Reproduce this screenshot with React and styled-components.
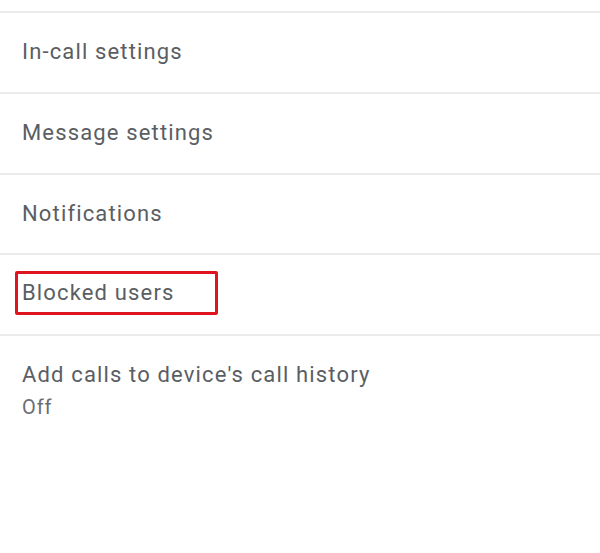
import React from "react";
import styled, { createGlobalStyle } from "styled-components";

const GlobalStyle = createGlobalStyle`
  html, body {
    margin: 0;
    padding: 0;
    background: #fff;
  }
  body {
    font-family: Roboto, "Noto Sans", Arial, sans-serif;
  }
`;

const Page = styled.div`
  width: 600px;
  height: 553px;
  background: #fff;
  padding-top: 11px;
  box-sizing: border-box;
  overflow: hidden;
`;

const List = styled.ul`
  list-style: none;
  margin: 0;
  padding: 0;
`;

const Row = styled.li`
  border-top: 2px solid #ebebeb;
  height: ${(p) => (p.$tall ? "auto" : "78.75px")};
  padding: ${(p) => (p.$tall ? "24px 0 0" : "0")};
  padding-left: 22px;
  display: flex;
  flex-direction: column;
  justify-content: ${(p) => (p.$tall ? "flex-start" : "center")};
`;

const Label = styled.span`
  font-size: 22px;
  letter-spacing: 1.15px;
  color: #5a5e63;
  line-height: 30px;
  align-self: flex-start;
  ${(p) =>
    p.$highlight &&
    `
    border: 3px solid #e0141e;
    border-radius: 2px;
    padding: 4px 40px 4px 4px;
    margin-left: -7px;
    margin-bottom: 4px;
  `}
`;

const Sub = styled.span`
  font-size: 20px;
  letter-spacing: 0.9px;
  color: #6a6e73;
  line-height: 34px;
`;

const items = [
  { label: "In-call settings" },
  { label: "Message settings" },
  { label: "Notifications" },
  { label: "Blocked users", highlight: true },
];

export default function App() {
  return (
    <Page>
      <GlobalStyle />
      <List>
        {items.map((item) => (
          <Row key={item.label}>
            <Label $highlight={item.highlight}>{item.label}</Label>
          </Row>
        ))}
        <Row $tall>
          <Label>Add calls to device's call history</Label>
          <Sub>Off</Sub>
        </Row>
      </List>
    </Page>
  );
}
